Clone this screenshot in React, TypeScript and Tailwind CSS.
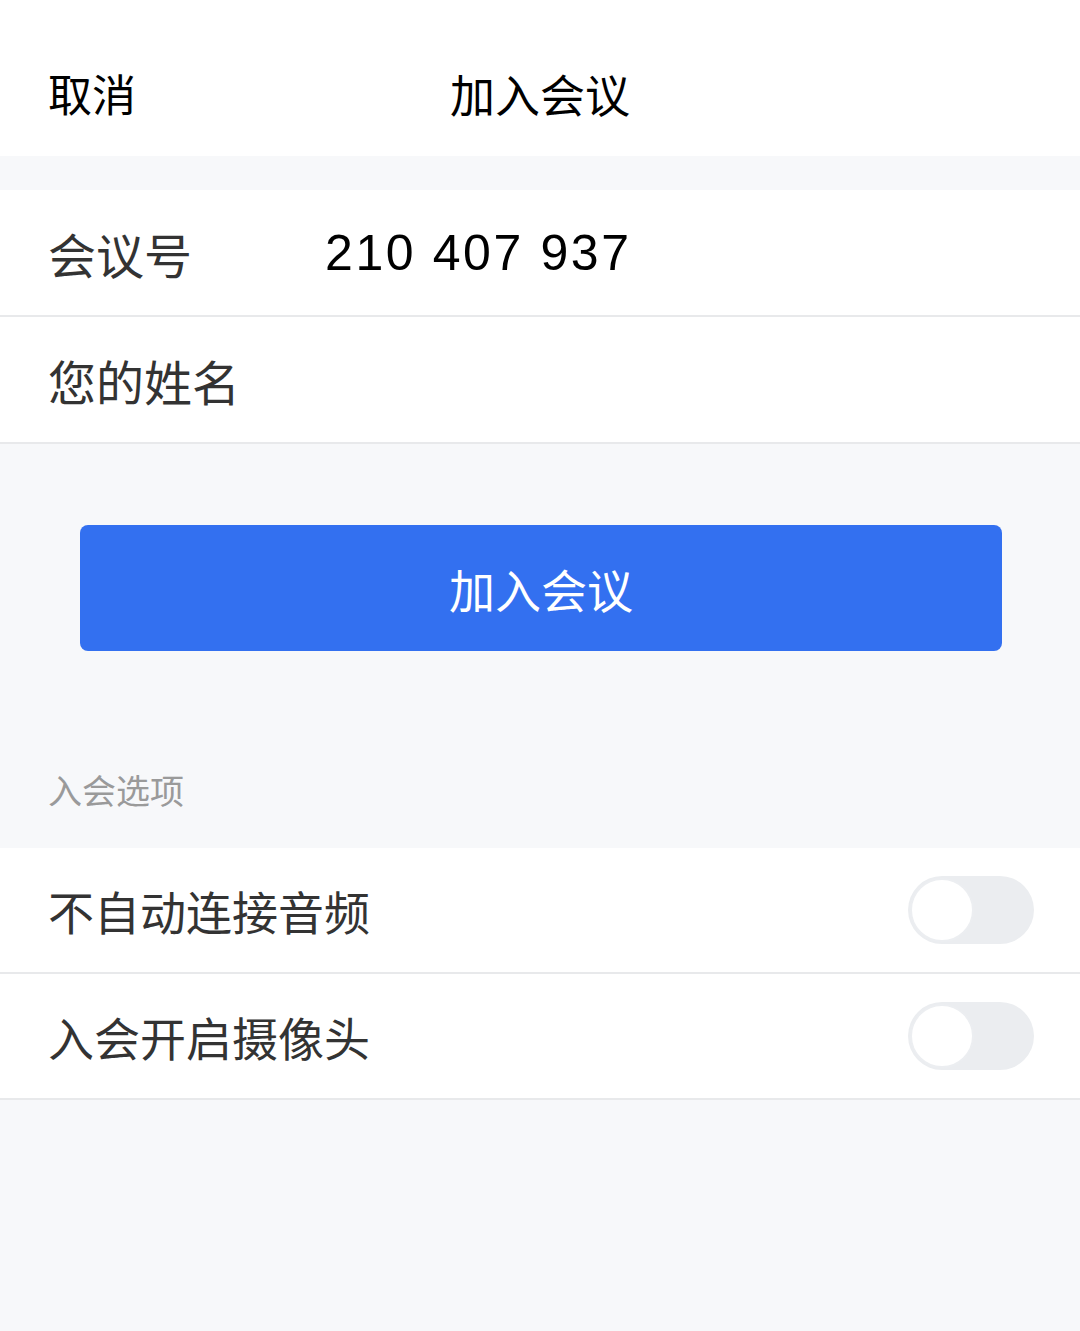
import { useState } from 'react';

const cjk = "font-['Noto_Sans_CJK_SC','Noto_Sans',sans-serif]";

function Toggle({ on, onClick }: { on: boolean; onClick: () => void }) {
  return (
    <button
      type="button"
      onClick={onClick}
      className={`relative h-[68px] w-[126px] rounded-full transition-colors ${on ? 'bg-[#3370f0]' : 'bg-[#ebedf0]'}`}
    >
      <span
        className={`absolute top-[2px] h-[64px] w-[64px] rounded-full border-2 border-[#eceef1] bg-white transition-all ${on ? 'left-[60px]' : 'left-[2px]'}`}
      />
    </button>
  );
}

export default function App() {
  const [noAudio, setNoAudio] = useState(false);
  const [camera, setCamera] = useState(false);

  return (
    <div className={`min-h-[1331px] w-[1080px] bg-[#f7f8fa] ${cjk}`}>
      {/* header */}
      <div className="relative flex h-[156px] items-center bg-white px-12 pt-[30px]">
        <span className="text-[44px] leading-none text-black">取消</span>
        <span className="absolute left-1/2 -translate-x-1/2 text-[45px] leading-none text-black">加入会议</span>
      </div>

      <div className="mt-[34px] bg-white">
        <div className="flex h-[127px] items-center border-b-2 border-[#e8e9eb] px-12">
          <span className="w-[277px] text-[48px] leading-none text-[#333]">会议号</span>
          <span className="font-['Liberation_Sans',Arial,sans-serif] text-[50px] leading-none tracking-[2.6px] text-black">
            210 407 937
          </span>
        </div>
        <div className="flex h-[127px] items-center border-b-2 border-[#e8e9eb] px-12">
          <span className="text-[48px] leading-none text-[#333]">您的姓名</span>
        </div>
      </div>

      <div className="pl-20 pr-[78px] pt-[81px]">
        <button
          type="button"
          className="flex h-[126px] w-full items-center justify-center rounded-lg bg-[#3370f0] text-[46px] leading-none text-white"
        >
          加入会议
        </button>
      </div>

      <div className="flex h-[197px] items-center px-12 pt-[80px]">
        <span className="text-[34px] leading-none text-[#9a9a9a]">入会选项</span>
      </div>

      <div className="bg-white">
        <div className="flex h-[126px] items-center justify-between border-b-2 border-[#e8e9eb] pl-12 pr-[46px]">
          <span className="text-[46px] leading-none text-[#333]">不自动连接音频</span>
          <Toggle on={noAudio} onClick={() => setNoAudio(!noAudio)} />
        </div>
        <div className="flex h-[126px] items-center justify-between border-b-2 border-[#e8e9eb] pl-12 pr-[46px]">
          <span className="text-[46px] leading-none text-[#333]">入会开启摄像头</span>
          <Toggle on={camera} onClick={() => setCamera(!camera)} />
        </div>
      </div>
    </div>
  );
}
